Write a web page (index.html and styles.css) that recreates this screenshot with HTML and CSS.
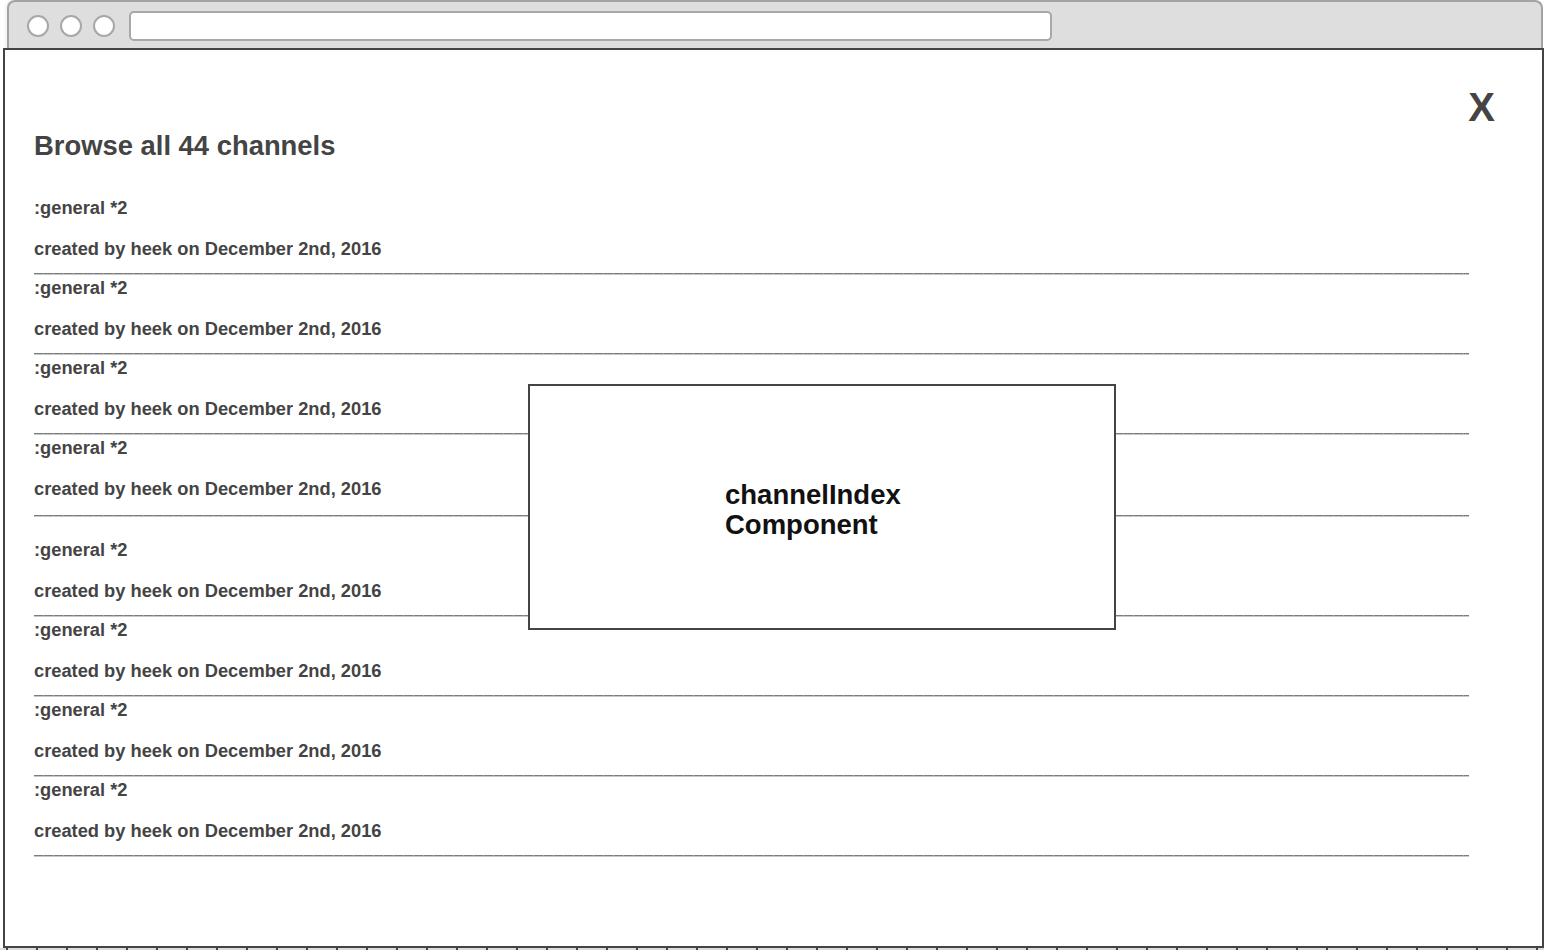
FILE: index.html
```html
<!DOCTYPE html>
<html lang="en">
<head>
<meta charset="utf-8">
<title>Browse channels</title>
<link rel="stylesheet" href="styles.css">
</head>
<body>
<div class="chrome">
  <span class="dot"></span>
  <span class="dot"></span>
  <span class="dot"></span>
  <div class="url"></div>
</div>
<main class="frame">
  <div class="close-row"><span class="close">X</span></div>
  <h1 class="title">Browse all 44 channels</h1>
  <ul class="list">
    <li class="item"><div class="name">:general *2</div><div class="meta">created by heek on December 2nd, 2016</div><div class="rule"></div></li>
    <li class="item"><div class="name">:general *2</div><div class="meta">created by heek on December 2nd, 2016</div><div class="rule"></div></li>
    <li class="item"><div class="name">:general *2</div><div class="meta">created by heek on December 2nd, 2016</div><div class="rule"></div></li>
    <li class="item item-break"><div class="name">:general *2</div><div class="meta">created by heek on December 2nd, 2016</div><div class="rule"></div></li>
    <li class="item"><div class="name">:general *2</div><div class="meta">created by heek on December 2nd, 2016</div><div class="rule"></div></li>
    <li class="item"><div class="name">:general *2</div><div class="meta">created by heek on December 2nd, 2016</div><div class="rule"></div></li>
    <li class="item"><div class="name">:general *2</div><div class="meta">created by heek on December 2nd, 2016</div><div class="rule"></div></li>
    <li class="item"><div class="name">:general *2</div><div class="meta">created by heek on December 2nd, 2016</div><div class="rule"></div></li>
  </ul>
  <div class="component"><div class="component-label">channelIndex<br>Component</div></div>
</main>
<div class="ruler"></div>
</body>
</html>
```
FILE: styles.css
```css
html, body {
  margin: 0;
  padding: 0;
  background: #fff;
  overflow: hidden;
}
body {
  font-family: "Liberation Sans", Arial, Helvetica, sans-serif;
  width: 1544px;
  height: 950px;
}
.chrome {
  box-sizing: border-box;
  margin-left: 7px;
  width: 1536px;
  height: 48px;
  background: #dedede;
  border: 2px solid #a3a3a3;
  border-bottom: none;
  border-radius: 8px 8px 0 0;
  display: flex;
  align-items: center;
  padding: 2px 0 0 18px;
  box-shadow: -2px 0 3px rgba(0,0,0,0.06);
}
.dot {
  box-sizing: border-box;
  width: 22px;
  height: 22px;
  border-radius: 50%;
  background: #fff;
  border: 2px solid #a8a8a8;
  margin-right: 11px;
}
.dot:nth-child(3) { margin-right: 14px; }
.url {
  box-sizing: border-box;
  width: 923px;
  height: 30px;
  background: #fff;
  border: 2px solid #a8a8a8;
  border-radius: 5px;
}
.frame {
  position: relative;
  box-sizing: border-box;
  display: block;
  margin-left: 3px;
  width: 1541px;
  height: 900px;
  border: 2px solid #444;
  background: #fff;
}
.close-row {
  display: flex;
  justify-content: flex-end;
  padding: 34px 47px 0 0;
}
.close {
  font-size: 40px;
  line-height: 46px;
  font-weight: bold;
  color: #444;
}
.title {
  margin: 0 0 31px 29px;
  font-size: 27.4px;
  line-height: 32px;
  font-weight: bold;
  color: #444;
}
.list {
  list-style: none;
  margin: 0 73px 0 29px;
  padding: 0;
}
.item {
  font-size: 18.3px;
  line-height: 30px;
  font-weight: bold;
  color: #444;
}
.name { height: 30px; }
.meta { margin-top: 11px; height: 30px; }
.rule {
  margin-top: 8px;
  height: 1px;
  background: repeating-linear-gradient(90deg, #7c7c7c 0 9px, #a8a8a8 9px 10px);
  box-shadow: 0 1px 0 #c8c8c8;
  transform: translateY(1px);
}
.item-break .rule { margin-top: 10px; }
.item-break { margin-bottom: 20px; }
.component {
  position: absolute;
  left: 523px;
  top: 334px;
  box-sizing: border-box;
  width: 588px;
  height: 246px;
  border: 2px solid #444;
  background: #fff;
  padding: 94px 0 0 195px;
}
.component-label {
  font-size: 27.5px;
  line-height: 30px;
  font-weight: bold;
  color: #111;
}
.ruler {
  height: 2px;
  background-color: #dcdcdc;
  background-image: linear-gradient(90deg, #444 0 2px, transparent 2px);
  background-size: 30px 2px;
  background-position: 6px 0;
}
```
